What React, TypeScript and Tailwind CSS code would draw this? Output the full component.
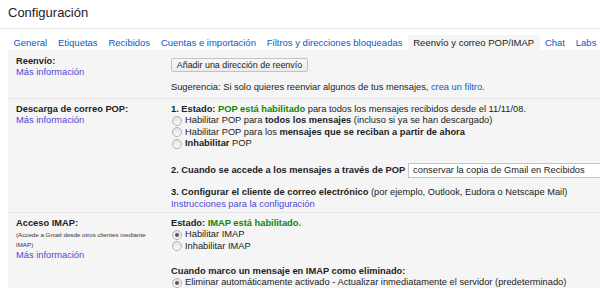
import React from "react";

const Radio = ({ checked = false }: { checked?: boolean }) => (
  <span className="inline-flex w-[10px] h-[10px] rounded-full border border-[#b0b0b0] bg-gradient-to-b from-[#e2e2e2] to-[#fbfbfb] items-center justify-center ml-[1px] mr-[3px] shrink-0">
    {checked && <span className="w-[4px] h-[4px] rounded-full bg-[#555]" />}
  </span>
);

const Link = ({ children, visited = false }: { children: React.ReactNode; visited?: boolean }) => (
  <span className={visited ? "text-[#4f47d6]" : "text-[#15c]"}>{children}</span>
);

export default function App() {
  const tabs = [
    "General",
    "Etiquetas",
    "Recibidos",
    "Cuentas e importación",
    "Filtros y direcciones bloqueadas",
    "Reenvío y correo POP/IMAP",
    "Chat",
    "Labs",
  ];
  return (
    <div className="w-[600px] h-[288px] overflow-hidden bg-white text-[#222] font-['Liberation_Sans',Arial,sans-serif] text-[9.3px] leading-[11px]">
      <div className="h-[29px] pl-[8px] pt-[5px] text-[13px] leading-[16px] border-b border-[#e5e5e5]">
        Configuración
      </div>
      <div className="flex pl-[8px] mt-[6px] h-[15px] whitespace-nowrap text-[9.5px]">
        {tabs.map((t) => (
          <div
            key={t}
            className={
              "px-[5.4px] leading-[15px] " +
              (t === "Reenvío y correo POP/IMAP" ? "bg-[#f5f5f5] text-[#222]" : "text-[#15c]")
            }
          >
            {t}
          </div>
        ))}
      </div>
      <div className="ml-[8px] bg-[#f5f5f5] h-[240px] whitespace-nowrap overflow-hidden">
        {/* Row 1 */}
        <div className="flex border-b border-[#e5e5e5] h-[49px]">
          <div className="w-[163px] pl-[8px] pt-[6px] shrink-0">
            <div className="font-bold">Reenvío:</div>
            <Link visited>Más información</Link>
          </div>
          <div className="pt-[8px]">
            <div className="h-[14px] w-[137px] border border-[#c2c2c2] rounded-[2px] bg-gradient-to-b from-[#f8f8f8] to-[#ececec] flex items-center justify-center text-[8.9px] leading-[12px]">
              Añadir una dirección de reenvío
            </div>
            <div className="mt-[10px]">
              Sugerencia: Si solo quieres reenviar algunos de tus mensajes, <Link>crea un filtro.</Link>
            </div>
          </div>
        </div>
        {/* Row 2 */}
        <div className="flex border-b border-[#e5e5e5] h-[114px]">
          <div className="w-[163px] pl-[8px] pt-[5px] shrink-0">
            <div className="font-bold">Descarga de correo POP:</div>
            <Link visited>Más información</Link>
          </div>
          <div className="pt-[5px] shrink-0">
            <div>
              <b>1. Estado: </b>
              <b className="text-[#0a870a]">POP está habilitado</b> para todos los mensajes recibidos desde el 11/11/08.
            </div>
            <div className="flex items-center h-[11.5px]">
              <Radio />
              <span>
                Habilitar POP para <b>todos los mensajes</b> (incluso si ya se han descargado)
              </span>
            </div>
            <div className="flex items-center h-[11.5px]">
              <Radio />
              <span>
                Habilitar POP para los <b>mensajes que se reciban a partir de ahora</b>
              </span>
            </div>
            <div className="flex items-center h-[11.5px]">
              <Radio />
              <span>
                <b>Inhabilitar</b> POP
              </span>
            </div>
            <div className="flex items-center mt-[13px] h-[15px]">
              <b>2. Cuando se accede a los mensajes a través de POP</b>
              <div className="ml-[3px] h-[15px] w-[400px] border border-r-0 border-[#c4c4c4] bg-white pl-[4px] flex items-center shrink-0">
                conservar la copia de Gmail en Recibidos
              </div>
            </div>
            <div className="mt-[9px]">
              <b>3. Configurar el cliente de correo electrónico</b> (por ejemplo, Outlook, Eudora o Netscape Mail)
            </div>
            <div className="leading-[12px]">
              <Link visited>Instrucciones para la configuración</Link>
            </div>
          </div>
        </div>
        {/* Row 3 */}
        <div className="flex">
          <div className="w-[163px] pl-[8px] pt-[5px] shrink-0">
            <div className="font-bold">Acceso IMAP:</div>
            <div className="text-[6.2px] leading-[9.5px] text-[#333] whitespace-normal w-[140px] pt-[1px]">
              (Accede a Gmail desde otros clientes mediante IMAP)
            </div>
            <div className="mt-[1px]">
              <Link visited>Más información</Link>
            </div>
          </div>
          <div className="pt-[5px]">
            <div>
              <b>Estado: </b>
              <b className="text-[#0a870a]">IMAP está habilitado.</b>
            </div>
            <div className="flex items-center h-[11.5px]">
              <Radio checked />
              <span>Habilitar IMAP</span>
            </div>
            <div className="flex items-center h-[11.5px]">
              <Radio />
              <span>Inhabilitar IMAP</span>
            </div>
            <div className="mt-[14px] font-bold">Cuando marco un mensaje en IMAP como eliminado:</div>
            <div className="flex items-center h-[11.5px]">
              <Radio checked />
              <span>Eliminar automáticamente activado - Actualizar inmediatamente el servidor (predeterminado)</span>
            </div>
          </div>
        </div>
      </div>
    </div>
  );
}
